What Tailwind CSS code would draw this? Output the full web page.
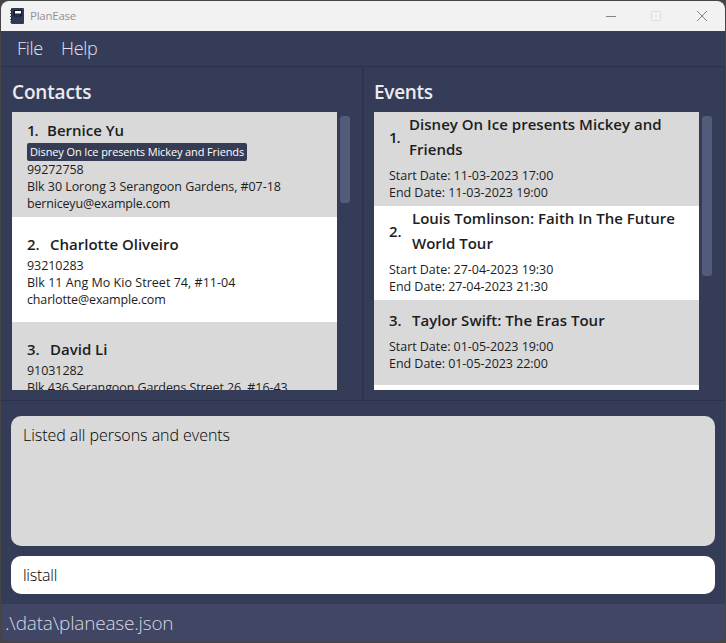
<!DOCTYPE html>
<html lang="en">
<head>
<meta charset="utf-8">
<title>PlanEase</title>
<script src="https://cdn.jsdelivr.net/npm/@tailwindcss/browser@4"></script>
</head>
<body class="w-[726px] h-[643px] overflow-hidden bg-[#454545] p-px font-['Open_Sans','Noto_Sans',sans-serif] whitespace-nowrap">
<div class="flex h-[641px] w-[724px] flex-col overflow-hidden rounded-lg bg-[#353c58]">
  <header class="flex h-[30px] shrink-0 items-center bg-[#f2f2f2] pl-[9px]">
    <svg class="h-4 w-[14px]" viewBox="0 0 14 16"><rect x="1" width="13" height="16" rx="1" fill="#303855"/><path d="M0 2.500h2M0 5.500h2M0 8.500h2M0 11.500h2M0 14h2" stroke="#3f4650"/><path d="M1.500 1v14" stroke="#172033" stroke-dasharray="1 1"/><rect x="3.500" y="2" width="8.500" height="6.500" rx="1" fill="#151a29"/><rect x="5" y="3" width="6" height="2.500" fill="#fff"/><path d="M5 7h5" stroke="#384263"/></svg>
    <span class="ml-[6px] text-[11.5px] leading-[16px] tracking-[-0.25px] text-[#929292]">PlanEase</span>
    <div class="ml-auto flex pr-[18px]">
      <svg class="h-[10px] w-[10px]" viewBox="0 0 10 10" fill="none" stroke="#858585"><path d="M0 5.500h10"/></svg>
      <svg class="ml-[35px] h-[10px] w-[10px]" viewBox="0 0 10 10" fill="none" stroke="#dedede"><rect x=".5" y=".5" width="9" height="9" rx="1"/></svg>
      <svg class="ml-[36px] h-[10px] w-[10px]" viewBox="0 0 10 10" fill="none" stroke="#858585"><path d="M0 0l10 10M10 0L0 10"/></svg>
    </div>
  </header>
  <nav class="flex h-[35px] shrink-0 items-start pl-4 pt-[5px] text-[18px] font-light leading-[24px] tracking-[-0.3px] text-[#e0e2e8]">
    <span class="w-[44px]">File</span><span>Help</span>
  </nav>
  <main class="flex h-[335px] shrink-0 border-y border-[#2b3250]">
    <section class="w-[363px] shrink-0 border-r-2 border-[#2e3552] pl-[11px] pt-[10px]">
      <h2 class="h-[35px] text-[19px] font-semibold leading-[31px] tracking-[-0.15px] text-[#eaebee]">Contacts</h2>
      <div class="flex">
        <div class="h-[278px] w-[325px] overflow-hidden bg-white text-[12.500px] leading-[17px] tracking-[-0.06px] text-[#1d1d1d]">
          <article class="flex h-[105px] flex-col items-start bg-[#d9d9d9] pl-[15px] pt-[6px]">
            <h3 class="flex h-[25px] text-[15px] font-semibold leading-[25px] tracking-normal"><span class="w-5 tracking-[-1px]">1.</span><span>Bernice Yu</span></h3>
            <div class="h-[18px] w-[220px] rounded-xs bg-[#353c54] pl-[3px] text-[11px] leading-[18px] tracking-[-0.12px] text-white">Disney On Ice presents Mickey and Friends</div>
            <p>99272758</p><p>Blk 30 Lorong 3 Serangoon Gardens, #07-18</p><p class="tracking-[-0.18px]">berniceyu@example.com</p>
          </article>
          <article class="h-[105px] pl-[15px] pt-[15px]">
            <h3 class="flex h-[25px] text-[15px] font-semibold leading-[25px] tracking-normal"><span class="w-[23px]">2.</span><span>Charlotte Oliveiro</span></h3>
            <p>93210283</p><p class="tracking-[0.03px]">Blk 11 Ang Mo Kio Street 74, #11-04</p><p class="tracking-[-0.15px]">charlotte@example.com</p>
          </article>
          <article class="h-[105px] bg-[#d9d9d9] pl-[15px] pt-[15px]">
            <h3 class="flex h-[25px] text-[15px] font-semibold leading-[25px] tracking-normal"><span class="w-[23px]">3.</span><span>David Li</span></h3>
            <p>91031282</p><p class="tracking-[-0.09px]">Blk 436 Serangoon Gardens Street 26, #16-43</p>
          </article>
        </div>
        <div class="ml-[3px] mt-1 h-[87px] w-[10px] rounded-[3px] bg-[#535b7a]"></div>
      </div>
    </section>
    <section class="w-[361px] shrink-0 border-r border-[#2e3552] pl-[10px] pt-[10px]">
      <h2 class="h-[35px] text-[19px] font-semibold leading-[31px] tracking-[-0.3px] text-[#eaebee]">Events</h2>
      <div class="flex">
        <div class="h-[278px] w-[325px] overflow-hidden bg-white text-[12.500px] leading-[17px] tracking-[-0.04px] text-[#1d1d1d]">
          <article class="h-[94px] bg-[#d9d9d9] pl-[15px]">
            <h3 class="mb-[5px] flex items-center text-[15px] font-semibold leading-[25px] tracking-[0.03px]"><span class="w-5 tracking-[-1px]">1.</span><span>Disney On Ice presents Mickey and<br>Friends</span></h3>
            <p>Start Date: 11-03-2023 17:00</p><p>End Date: 11-03-2023 19:00</p>
          </article>
          <article class="h-[94px] pl-[15px]">
            <h3 class="mb-[5px] flex items-center text-[15px] font-semibold leading-[25px] tracking-normal"><span class="w-[23px]">2.</span><span>Louis Tomlinson: Faith In The Future<br>World Tour</span></h3>
            <p>Start Date: 27-04-2023 19:30</p><p>End Date: 27-04-2023 21:30</p>
          </article>
          <article class="h-[85px] bg-[#d9d9d9] pl-[15px] pt-2">
            <h3 class="mb-[5px] flex text-[15px] font-semibold leading-[25px] tracking-[0.03px]"><span class="w-[23px]">3.</span><span>Taylor Swift: The Eras Tour</span></h3>
            <p>Start Date: 01-05-2023 19:00</p><p>End Date: 01-05-2023 22:00</p>
          </article>
        </div>
        <div class="ml-[3px] mt-1 h-[160px] w-[10px] rounded-[3px] bg-[#535b7a]"></div>
      </div>
    </section>
  </main>
  <div class="mx-[10px] mt-[15px] h-[130px] shrink-0 rounded-[10px] bg-[#d9d9d9] pl-3 pt-[7px] text-[16px] font-light leading-[24px] tracking-[-0.04px] text-black">Listed all persons and events</div>
  <div class="mx-[10px] mt-[10px] h-[38px] shrink-0 rounded-[10px] bg-white pl-3 text-[16px] font-light leading-[38px] tracking-[-0.25px] text-black">listall</div>
  <footer class="mt-[10px] h-[38px] shrink-0 bg-[#404664] pl-1 text-[19px] font-light leading-[38px] tracking-[-0.18px] text-[#d8dae2]">.\data\planease.json</footer>
</div>
</body>
</html>
